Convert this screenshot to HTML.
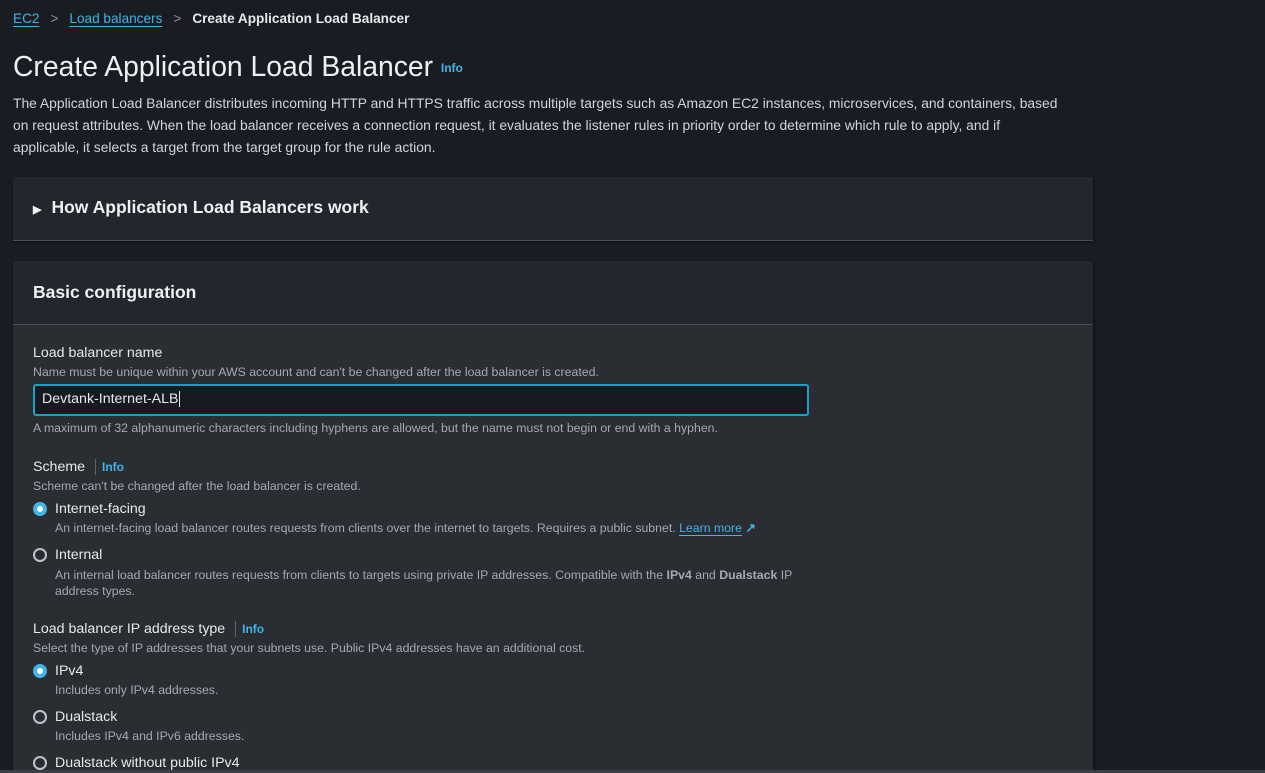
<!DOCTYPE html>
<html><head><meta charset="utf-8"><style>
*{margin:0;padding:0;box-sizing:border-box}
body{width:1265px;height:773px;overflow:hidden;background:#191c23;font-family:"Liberation Sans",sans-serif;color:#d1d5db;position:relative}
.a{position:absolute;white-space:nowrap}
.link{color:#42b4e6;text-decoration:underline;text-underline-offset:3px}
.info{color:#42b4e6;font-weight:bold;font-size:12px}
.sm{font-size:12.3px;color:#a3aab4}
.lbl{font-size:14.2px;color:#e6e8eb}
.radio{position:absolute;width:14px;height:14px;border-radius:50%;border:2px solid #c0c4ca}
.radio.on{border:4px solid #42b4e6;background:#fff}
</style></head><body>
<div class="a" style="left:13px;top:11px;font-size:13.6px"><span class="link">EC2</span><span style="color:#8d939b;margin:0 11px">&gt;</span><span class="link">Load balancers</span><span style="color:#8d939b;margin:0 11px">&gt;</span><b style="color:#e6e8eb">Create Application Load Balancer</b></div>
<div class="a" style="left:13px;top:50px;font-size:28.3px;color:#eef0f2">Create Application Load Balancer <span class="info" style="font-size:12px;vertical-align:4px">Info</span></div>
<div class="a" style="left:13px;top:92px;font-size:13.85px;line-height:22px;color:#d1d5db">The Application Load Balancer distributes incoming HTTP and HTTPS traffic across multiple targets such as Amazon EC2 instances, microservices, and containers, based<br>on request attributes. When the load balancer receives a connection request, it evaluates the listener rules in priority order to determine which rule to apply, and if<br>applicable, it selects a target from the target group for the rule action.</div>
<div class="a" style="left:13px;top:177px;width:1080px;height:64px;background:#22262d;border-bottom:1px solid #474b52;box-shadow:1px 1px 2px #0e1014"></div>
<div class="a" style="left:33px;top:197px;font-size:17.5px;font-weight:bold;color:#eef0f2"><span style="font-size:11px;margin-right:10px">▶</span>How Application Load Balancers work</div>
<div class="a" style="left:13px;top:261px;width:1080px;height:509px;background:#2a2d31;box-shadow:1px 1px 2px #0e1014"></div>
<div class="a" style="left:13px;top:261px;width:1080px;height:64px;background:#22262d;border-bottom:1px solid #474b52"></div>
<div class="a" style="left:33px;top:282px;font-size:17.5px;font-weight:bold;color:#eef0f2">Basic configuration</div>
<div class="a lbl" style="left:33px;top:345px">Load balancer name</div>
<div class="a sm" style="left:33px;top:365px">Name must be unique within your AWS account and can't be changed after the load balancer is created.</div>
<div class="a" style="left:33px;top:384px;width:776px;height:32px;border:2px solid #1ba0c8;border-radius:3px;background:#161a21"></div>
<div class="a" style="left:42px;top:391px;font-size:14.2px;color:#e6e8eb">Devtank-Internet-ALB<span style="border-left:1px solid #e6e8eb;margin-left:1px"></span></div>
<div class="a sm" style="left:33px;top:421px">A maximum of 32 alphanumeric characters including hyphens are allowed, but the name must not begin or end with a hyphen.</div>
<div class="a lbl" style="left:33px;top:459px">Scheme <span style="border-left:1px solid #5f6570;margin:0 6px"></span><span class="info">Info</span></div>
<div class="a sm" style="left:33px;top:479px">Scheme can't be changed after the load balancer is created.</div>
<div class="radio on" style="left:33px;top:502px"></div>
<div class="a lbl" style="left:55px;top:501px">Internet-facing</div>
<div class="a sm" style="left:55px;top:521px">An internet-facing load balancer routes requests from clients over the internet to targets. Requires a public subnet. <span class="link">Learn more</span> <span style="color:#42b4e6;font-weight:bold">↗</span></div>
<div class="radio" style="left:33px;top:548px"></div>
<div class="a lbl" style="left:55px;top:547px">Internal</div>
<div class="a sm" style="left:55px;top:567px;line-height:16px;white-space:normal;width:760px">An internal load balancer routes requests from clients to targets using private IP addresses. Compatible with the <b>IPv4</b> and <b>Dualstack</b> IP address types.</div>
<div class="a lbl" style="left:33px;top:621px">Load balancer IP address type <span style="border-left:1px solid #5f6570;margin:0 6px"></span><span class="info">Info</span></div>
<div class="a sm" style="left:33px;top:641px">Select the type of IP addresses that your subnets use. Public IPv4 addresses have an additional cost.</div>
<div class="radio on" style="left:33px;top:664px"></div>
<div class="a lbl" style="left:55px;top:663px">IPv4</div>
<div class="a sm" style="left:55px;top:683px">Includes only IPv4 addresses.</div>
<div class="radio" style="left:33px;top:710px"></div>
<div class="a lbl" style="left:55px;top:709px">Dualstack</div>
<div class="a sm" style="left:55px;top:729px">Includes IPv4 and IPv6 addresses.</div>
<div class="radio" style="left:33px;top:756px"></div>
<div class="a lbl" style="left:55px;top:755px">Dualstack without public IPv4</div>
<div class="a" style="left:0;top:770px;width:1265px;height:3px;background:#3a3e45"></div>
</body></html>
